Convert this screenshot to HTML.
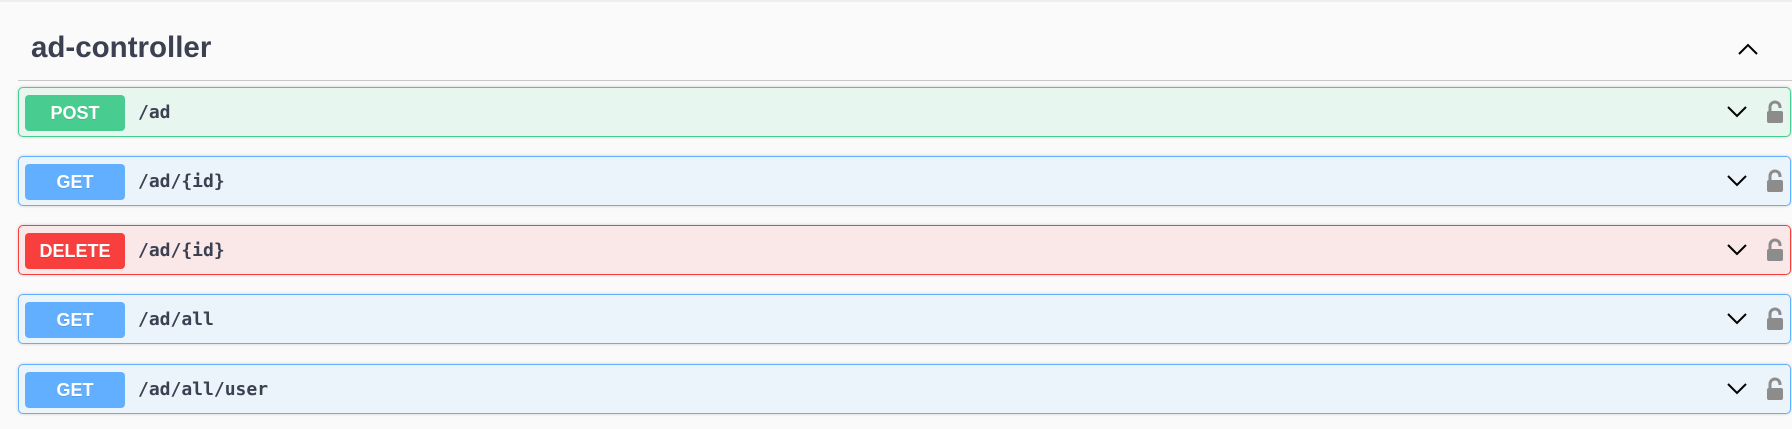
<!DOCTYPE html>
<html><head><style>
body{margin:0;background:#fafafa;width:1792px;height:429px;overflow:hidden;font-family:"Liberation Sans",sans-serif;position:relative}
.top{position:absolute;left:0;right:0;top:0;height:2px;background:#eee}
h3{position:absolute;left:31px;top:31px;margin:0;font-size:29.5px;line-height:34px;font-weight:bold;color:#3b4151}
.line{position:absolute;left:18px;right:0;top:80px;height:1px;background:#c8c8c8}
.up{position:absolute;left:1737px;top:42px}
.op{position:absolute;left:18px;width:1771px;height:48px;border:1px solid;border-radius:5px;box-shadow:0 0 3px rgba(0,0,0,.19)}
.b{position:absolute;left:6px;top:7px;width:100px;height:36px;border-radius:4px;color:#fff;font-weight:bold;font-size:18px;text-align:center;line-height:36px;text-shadow:0 1px 0 rgba(0,0,0,.1)}
.p{position:absolute;left:119px;top:0;line-height:50px;font-family:"DejaVu Sans Mono",monospace;font-weight:bold;font-size:18px;color:#3b4151}
.ch{position:absolute;left:1707px;top:17px}
.lk{position:absolute;left:1746px;top:12px}
.post{border-color:#49cc90;background:#e8f6f0}.post .b{background:#49cc90}
.get{border-color:#61affe;background:#ebf3fb}.get .b{background:#61affe}
.del{border-color:#f93e3e;background:#fae7e7}.del .b{background:#f93e3e}
</style></head><body>
<div class="top"></div>
<h3>ad-controller</h3>
<svg class="up" width="22" height="14" viewBox="0 0 22 14"><path d="M2 12 L11 3 L20 12" fill="none" stroke="#000" stroke-width="2"/></svg>
<div class="line"></div>

<div class="op post" style="top:87px"><div class="b">POST</div><div class="p">/ad</div>
<svg class="ch" width="22" height="14" viewBox="0 0 22 14"><path d="M2 2 L11 11 L20 2" fill="none" stroke="#000" stroke-width="2"/></svg>
<svg class="lk" width="20" height="24" viewBox="0 0 20 24"><path d="M5 11 V7 a5 5 0 0 1 10 0 V8" fill="none" stroke="#8c8c8c" stroke-width="3"/><rect x="2" y="11" width="16" height="12" rx="2" fill="#8c8c8c"/></svg></div>

<div class="op get" style="top:156px"><div class="b">GET</div><div class="p">/ad/{id}</div>
<svg class="ch" width="22" height="14" viewBox="0 0 22 14"><path d="M2 2 L11 11 L20 2" fill="none" stroke="#000" stroke-width="2"/></svg>
<svg class="lk" width="20" height="24" viewBox="0 0 20 24"><path d="M5 11 V7 a5 5 0 0 1 10 0 V8" fill="none" stroke="#8c8c8c" stroke-width="3"/><rect x="2" y="11" width="16" height="12" rx="2" fill="#8c8c8c"/></svg></div>

<div class="op del" style="top:225px"><div class="b">DELETE</div><div class="p">/ad/{id}</div>
<svg class="ch" width="22" height="14" viewBox="0 0 22 14"><path d="M2 2 L11 11 L20 2" fill="none" stroke="#000" stroke-width="2"/></svg>
<svg class="lk" width="20" height="24" viewBox="0 0 20 24"><path d="M5 11 V7 a5 5 0 0 1 10 0 V8" fill="none" stroke="#8c8c8c" stroke-width="3"/><rect x="2" y="11" width="16" height="12" rx="2" fill="#8c8c8c"/></svg></div>

<div class="op get" style="top:294px"><div class="b">GET</div><div class="p">/ad/all</div>
<svg class="ch" width="22" height="14" viewBox="0 0 22 14"><path d="M2 2 L11 11 L20 2" fill="none" stroke="#000" stroke-width="2"/></svg>
<svg class="lk" width="20" height="24" viewBox="0 0 20 24"><path d="M5 11 V7 a5 5 0 0 1 10 0 V8" fill="none" stroke="#8c8c8c" stroke-width="3"/><rect x="2" y="11" width="16" height="12" rx="2" fill="#8c8c8c"/></svg></div>

<div class="op get" style="top:364px"><div class="b">GET</div><div class="p">/ad/all/user</div>
<svg class="ch" width="22" height="14" viewBox="0 0 22 14"><path d="M2 2 L11 11 L20 2" fill="none" stroke="#000" stroke-width="2"/></svg>
<svg class="lk" width="20" height="24" viewBox="0 0 20 24"><path d="M5 11 V7 a5 5 0 0 1 10 0 V8" fill="none" stroke="#8c8c8c" stroke-width="3"/><rect x="2" y="11" width="16" height="12" rx="2" fill="#8c8c8c"/></svg></div>
</body></html>
